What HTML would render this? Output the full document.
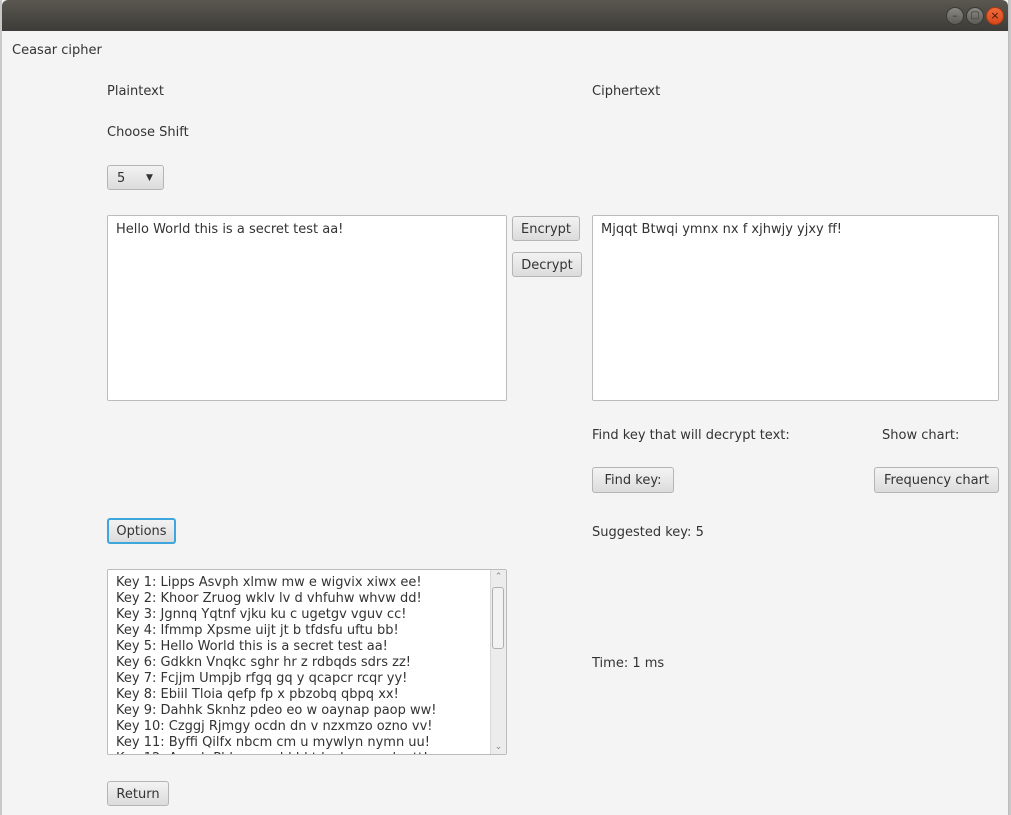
<!DOCTYPE html>
<html><head><meta charset="utf-8"><style>
*{margin:0;padding:0;box-sizing:border-box}
body{width:1011px;height:815px;overflow:hidden;background:#c8c8c8;font-family:"DejaVu Sans","Liberation Sans",sans-serif;font-size:13px;color:#333;position:relative}
.win{position:absolute;left:2px;top:0;width:1007px;height:815px;background:#f4f4f4;border-right:1px solid #bdbdbd}
.tb{position:absolute;left:0;top:0;width:100%;height:31px;background:linear-gradient(#5a5750,#3d3c38);border-radius:6px 6px 0 0}
.c{position:absolute;top:7px;width:18px;height:18px;border-radius:50%;background:linear-gradient(#8a8882,#5d5b56);border:1px solid #3a3935;color:#3a3935;font-size:11px;line-height:16px;text-align:center}
.t{position:absolute;white-space:nowrap;line-height:16px}
.btn{position:absolute;border:1px solid #b5b5b5;border-radius:3px;background:linear-gradient(#f3f3f3,#dcdcdc);text-align:center;line-height:25px;white-space:nowrap}
.ta{position:absolute;background:#fff;border:1px solid #bcbcbc;border-radius:2px}
</style></head><body>
<div class="win">
<div class="tb">
<div class="c" style="left:944px">–</div>
<div class="c" style="left:964px;font-size:10px">▢</div>
<div class="c" style="left:984px;background:linear-gradient(#f26a3a,#d9481a);border-color:#a83a14;color:#3a1a0a">×</div>
</div>
</div>
<div class="t" style="left:12px;top:43px">Ceasar cipher</div>
<div class="t" style="left:107px;top:84px">Plaintext</div>
<div class="t" style="left:592px;top:84px">Ciphertext</div>
<div class="t" style="left:107px;top:125px">Choose Shift</div>
<div class="btn" style="left:107px;top:165px;width:57px;height:25px;text-align:left;padding-left:9px">5<span style="position:absolute;left:38px;top:0;font-size:9px">▼</span></div>
<div class="ta" style="left:107px;top:215px;width:400px;height:186px"><div class="t" style="left:8px;top:6px">Hello World this is a secret test aa!</div></div>
<div class="btn" style="left:512px;top:216px;width:68px;height:25px">Encrypt</div>
<div class="btn" style="left:512px;top:252px;width:70px;height:25px">Decrypt</div>
<div class="ta" style="left:592px;top:215px;width:407px;height:186px"><div class="t" style="left:8px;top:6px">Mjqqt Btwqi ymnx nx f xjhwjy yjxy ff!</div></div>
<div class="t" style="left:592px;top:428px">Find key that will decrypt text:</div>
<div class="t" style="left:882px;top:428px">Show chart:</div>
<div class="btn" style="left:592px;top:467px;width:82px;height:26px">Find key:</div>
<div class="btn" style="left:874px;top:467px;width:125px;height:26px">Frequency chart</div>
<div class="btn" style="left:107px;top:518px;width:69px;height:26px;border:2px solid #3fa6dd;line-height:23px">Options</div>
<div class="t" style="left:592px;top:525px">Suggested key: 5</div>
<div class="ta" style="left:107px;top:569px;width:400px;height:186px;overflow:hidden">
<div style="position:absolute;left:8px;top:5px;line-height:16px;white-space:nowrap">
Key 1: Lipps Asvph xlmw mw e wigvix xiwx ee!<br>Key 2: Khoor Zruog wklv lv d vhfuhw whvw dd!<br>Key 3: Jgnnq Yqtnf vjku ku c ugetgv vguv cc!<br>Key 4: Ifmmp Xpsme uijt jt b tfdsfu uftu bb!<br>Key 5: Hello World this is a secret test aa!<br>Key 6: Gdkkn Vnqkc sghr hr z rdbqds sdrs zz!<br>Key 7: Fcjjm Umpjb rfgq gq y qcapcr rcqr yy!<br>Key 8: Ebiil Tloia qefp fp x pbzobq qbpq xx!<br>Key 9: Dahhk Sknhz pdeo eo w oaynap paop ww!<br>Key 10: Czggj Rjmgy ocdn dn v nzxmzo ozno vv!<br>Key 11: Byffi Qilfx nbcm cm u mywlyn nymn uu!<br>Key 12: Axeeh Phkew mabl bl t lxvkxm mxlm tt!</div>
<div style="position:absolute;right:0;top:0;width:16px;height:100%;background:#ececec;border-left:1px solid #d8d8d8">
<div style="position:absolute;left:0;top:2px;width:15px;text-align:center;font-size:9px;color:#888">⌃</div>
<div style="position:absolute;left:1px;top:17px;width:12px;height:62px;border:1px solid #b0b0b0;border-radius:3px;background:#f2f2f2"></div>
<div style="position:absolute;left:0;bottom:2px;width:15px;text-align:center;font-size:9px;color:#888">⌄</div>
</div>
</div>
<div class="t" style="left:592px;top:656px">Time: 1 ms</div>
<div class="btn" style="left:107px;top:781px;width:62px;height:25px">Return</div>
</body></html>
